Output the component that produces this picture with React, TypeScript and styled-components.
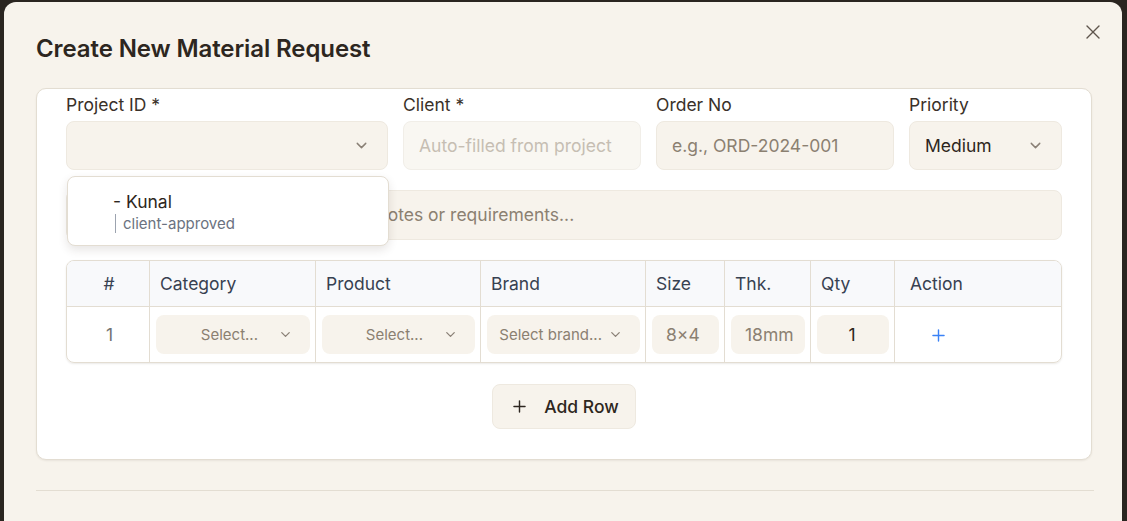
import React from 'react';
import styled, {createGlobalStyle} from 'styled-components';
import {ChevronDown, Plus, X} from 'lucide-react';

const GlobalStyle = createGlobalStyle`
    html, body {
        margin: 0;
        padding: 0;
        background: #2a2520;
        overflow: hidden;
        font-family: Inter, "Noto Sans", sans-serif;
    }
    * {
        box-sizing: border-box;
    }
`;

const columns = [
    {label: '#', width: 83, center: true},
    {label: 'Category', width: 166},
    {label: 'Product', width: 165},
    {label: 'Brand', width: 165},
    {label: 'Size', width: 79},
    {label: 'Thk.', width: 86},
    {label: 'Qty', width: 84},
    {label: 'Action'},
];

const App = () => {
    return (
        <>
            <GlobalStyle/>
            <Modal>
                <Header>
                    <Title>{'Create New Material Request'}</Title>
                    <CloseButton aria-label='Close'>
                        <X
                            size={24}
                            strokeWidth={1.4}
                        />
                    </CloseButton>
                </Header>
                <Card>
                    <FieldGrid>
                        <Field>
                            <Label>{'Project ID *'}</Label>
                            <SelectBox>
                                <span/>
                                <Chevron size={17}/>
                            </SelectBox>
                            <Dropdown>
                                <OptionName>{'- Kunal'}</OptionName>
                                <OptionMeta>{'client-approved'}</OptionMeta>
                            </Dropdown>
                        </Field>
                        <Field>
                            <Label>{'Client *'}</Label>
                            <TextInput
                                disabled={true}
                                placeholder='Auto-filled from project'
                            />
                        </Field>
                        <Field>
                            <Label>{'Order No'}</Label>
                            <TextInput placeholder='e.g., ORD-2024-001'/>
                        </Field>
                        <Field>
                            <Label>{'Priority'}</Label>
                            <SelectBox>
                                <SelectValue>{'Medium'}</SelectValue>
                                <Chevron size={17}/>
                            </SelectBox>
                        </Field>
                    </FieldGrid>
                    <Notes placeholder='Enter specific instructions, delivery notes or requirements...'/>
                    <Table>
                        <HeadRow>
                            {columns.map((col) => (
                                <HeadCell
                                    key={col.label}
                                    center={col.center}
                                    style={col.width ? {width: col.width} : undefined}
                                >
                                    {col.label}
                                </HeadCell>
                            ))}
                        </HeadRow>
                        <BodyRow>
                            <BodyCell style={{width: 83}}>
                                <RowNumber>{'1'}</RowNumber>
                            </BodyCell>
                            <BodyCell style={{width: 166}}>
                                <CellSelect>
                                    <CellSelectText>{'Select...'}</CellSelectText>
                                    <Chevron size={15}/>
                                </CellSelect>
                            </BodyCell>
                            <BodyCell style={{width: 165}}>
                                <CellSelect>
                                    <CellSelectText>{'Select...'}</CellSelectText>
                                    <Chevron size={15}/>
                                </CellSelect>
                            </BodyCell>
                            <BodyCell style={{width: 165}}>
                                <CellSelect tight={true}>
                                    <CellSelectText>{'Select brand...'}</CellSelectText>
                                    <Chevron size={15}/>
                                </CellSelect>
                            </BodyCell>
                            <BodyCell style={{width: 79}}>
                                <CellInput defaultValue='8×4'/>
                            </BodyCell>
                            <BodyCell style={{width: 86}}>
                                <CellInput defaultValue='18mm'/>
                            </BodyCell>
                            <BodyCell style={{width: 84}}>
                                <CellInput
                                    defaultValue='1'
                                    dark={true}
                                />
                            </BodyCell>
                            <BodyCell>
                                <ActionButton aria-label='Add'>
                                    <Plus
                                        size={19}
                                        strokeWidth={1.8}
                                    />
                                </ActionButton>
                            </BodyCell>
                        </BodyRow>
                    </Table>
                    <AddRowWrap>
                        <AddRowButton>
                            <Plus
                                size={19}
                                strokeWidth={1.8}
                            />
                            {'Add Row'}
                        </AddRowButton>
                    </AddRowWrap>
                </Card>
                <Divider/>
            </Modal>
        </>
    );
};

export default App;

const Modal = styled.div`
    margin: 2px 5px 0 4px;
    height: 560px;
    background: #f7f3ec;
    border-radius: 12px 12px 0 0;
    padding: 0 30px 0 32px;
    display: flex;
    flex-direction: column;
`;

const Header = styled.div`
    height: 86px;
    display: flex;
    align-items: flex-start;
    justify-content: space-between;
`;

const Title = styled.h2`
    margin: 31px 0 0 0;
    font-size: 24px;
    line-height: 32px;
    font-weight: 600;
    color: #2d2620;
    letter-spacing: -0.1px;
`;

const CloseButton = styled.button`
    margin: 16px -15px 0 0;
    width: 28px;
    height: 28px;
    display: flex;
    align-items: center;
    justify-content: center;
    border: none;
    background: transparent;
    color: #5f564d;
    padding: 0;
`;

const Card = styled.div`
    background: #ffffff;
    border: 1px solid #e3ddd2;
    border-radius: 10px;
    padding: 4px 29px 30px;
    display: flex;
    flex-direction: column;
    box-shadow: 0 1px 2px rgba(60, 45, 30, 0.08);
`;

const FieldGrid = styled.div`
    display: grid;
    grid-template-columns: 322px 238px 238px 153px;
    gap: 15px;
`;

const Field = styled.div`
    position: relative;
    display: flex;
    flex-direction: column;
    gap: 4px;
`;

const Label = styled.label`
    font-size: 17.5px;
    line-height: 24px;
    font-weight: 400;
    color: #3a3129;
`;

const SelectBox = styled.div`
    height: 49px;
    background: #f7f3ec;
    border: 1px solid #eee9e0;
    border-radius: 8px;
    display: flex;
    align-items: center;
    justify-content: space-between;
    padding: 0 17px 0 15px;
`;

const SelectValue = styled.span`
    font-size: 17.5px;
    color: #2d2620;
`;

const Chevron = styled(ChevronDown)`
    color: #8a8076;
    flex-shrink: 0;
`;

const TextInput = styled.input`
    height: 49px;
    background: #f7f3ec;
    border: 1px solid #eee9e0;
    border-radius: 8px;
    padding: 0 15px;
    font-family: inherit;
    font-size: 17.5px;
    color: #2d2620;
    outline: none;

    &::placeholder {
        color: #8b8071;
    }

    &:disabled {
        background: #f9f7f2;
        border-color: #f1eee8;
    }

    &:disabled::placeholder {
        color: #c6beb3;
    }
`;

const Dropdown = styled.div`
    position: absolute;
    top: 83px;
    left: 1px;
    width: 322px;
    height: 70px;
    background: #ffffff;
    border: 1px solid #e3ddd2;
    border-radius: 8px;
    box-shadow: 0 4px 10px rgba(60, 45, 30, 0.12);
    padding: 13px 0 0 45px;
    z-index: 2;
    display: flex;
    flex-direction: column;
`;

const OptionName = styled.div`
    font-size: 17.5px;
    line-height: 24px;
    color: #2d2620;
`;

const OptionMeta = styled.div`
    font-size: 15px;
    line-height: 19px;
    color: #6b7280;
    border-left: 1px solid #9ca3af;
    padding-left: 7px;
    margin-left: 2px;
`;

const Notes = styled.textarea`
    margin-top: 20px;
    height: 50px;
    resize: none;
    background: #f7f3ec;
    border: 1px solid #eee9e0;
    border-radius: 8px;
    padding: 12px 15px;
    font-family: inherit;
    font-size: 17.5px;
    line-height: 24px;
    outline: none;

    &::placeholder {
        color: #8b8071;
    }
`;

const Table = styled.div`
    margin-top: 20px;
    border: 1px solid #e3ddd2;
    border-radius: 8px;
    overflow: hidden;
    display: flex;
    flex-direction: column;
    box-shadow: 0 1px 2px rgba(60, 45, 30, 0.1);
`;

const HeadRow = styled.div`
    display: flex;
    height: 46px;
    background: #f8f9fb;
    border-bottom: 1px solid #e3ddd2;
`;

const HeadCell = styled.div<{center?: boolean}>`
    flex-shrink: 0;
    display: flex;
    align-items: center;
    justify-content: ${({center}) => (center ? 'center' : 'flex-start')};
    padding: ${({center}) => (center ? '0 0 0 2px' : '0 10px')};
    font-size: 17.5px;
    font-weight: 400;
    color: #374151;
    border-right: 1px solid #e3ddd2;

    &:last-child {
        flex: 1;
        border-right: none;
        padding-left: 15px;
    }
`;

const BodyRow = styled.div`
    display: flex;
    height: 55px;
`;

const BodyCell = styled.div`
    flex-shrink: 0;
    display: flex;
    align-items: center;
    justify-content: center;
    padding: 0 5px 0 6px;
    border-right: 1px solid #e3ddd2;

    &:last-child {
        flex: 1;
        border-right: none;
        justify-content: flex-start;
    }
`;

const RowNumber = styled.span`
    font-size: 17.5px;
    color: #737373;
    padding-left: 2px;
`;

const CellSelect = styled.div<{tight?: boolean}>`
    width: 100%;
    height: 39px;
    background: #f7f3ec;
    border-radius: 8px;
    display: flex;
    align-items: center;
    justify-content: flex-end;
    gap: ${({tight}) => (tight ? '6px' : '20px')};
    padding: 0 17px 0 10px;
    white-space: nowrap;
`;

const CellSelectText = styled.span`
    font-size: 15px;
    color: #8b8071;
`;

const CellInput = styled.input<{dark?: boolean}>`
    width: 100%;
    height: 39px;
    min-width: 0;
    background: #f7f3ec;
    border: none;
    border-radius: 8px;
    padding: ${({dark}) => (dark ? '0 6px 0 4px' : '0 2px 0 14px')};
    font-family: inherit;
    font-size: 17.5px;
    text-align: ${({dark}) => (dark ? 'center' : 'left')};
    color: ${({dark}) => (dark ? '#2d2620' : '#8b8071')};
    outline: none;
`;

const ActionButton = styled.button`
    margin-left: 28px;
    border: none;
    background: transparent;
    color: #3b82f6;
    padding: 0;
    display: flex;
    margin-top: 2px;
`;

const AddRowWrap = styled.div`
    margin-top: 21px;
    display: flex;
    justify-content: center;
`;

const AddRowButton = styled.button`
    height: 45px;
    padding: 0 16px 0 17px;
    display: flex;
    align-items: center;
    gap: 15px;
    background: #f7f3ec;
    border: 1px solid #eee9e0;
    border-radius: 8px;
    font-family: inherit;
    font-size: 17.5px;
    font-weight: 500;
    color: #2d2620;
`;

const Divider = styled.div`
    margin-top: 30px;
    margin-right: -2px;
    height: 1px;
    background: #e3ddd2;
`;
